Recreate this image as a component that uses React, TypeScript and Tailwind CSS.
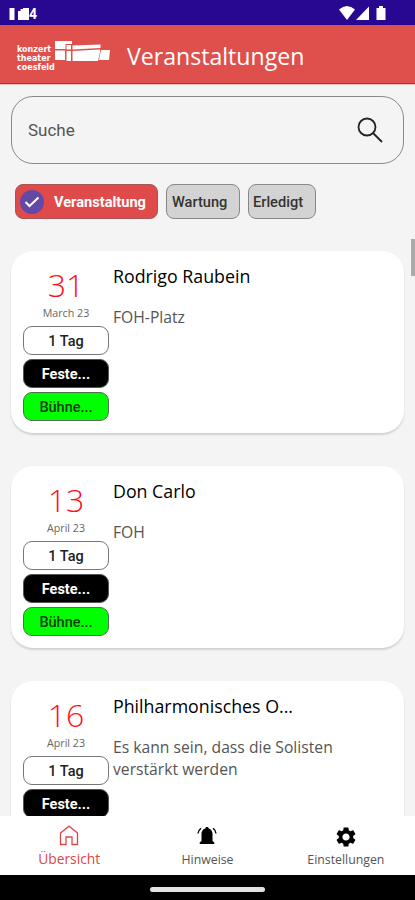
import React from 'react';
import { MdSettings } from 'react-icons/md';

interface EventItem {
  day: string;
  month: string;
  title: string;
  note: string;
}

const events: EventItem[] = [
  { day: '31', month: 'March 23', title: 'Rodrigo Raubein', note: 'FOH-Platz' },
  { day: '13', month: 'April 23', title: 'Don Carlo', note: 'FOH' },
  { day: '16', month: 'April 23', title: 'Philharmonisches O...', note: 'Es kann sein, dass die Solisten verstärkt werden' },
];

const StatusBar: React.FC = () => (
  <div className="h-[25px] shrink-0 bg-[#290891] flex items-start justify-between pl-[9px] pr-[28px] text-white">
    <div className="flex items-center h-[27px]">
      <svg width="21" height="13" viewBox="0 0 21 13" fill="currentColor">
        <path d="M0.5 1h5v12h-5zM9 4h2.5V2H14V1h6v12H9z" />
      </svg>
      <span className="font-['Roboto',sans-serif] font-bold text-[14px] leading-none -ml-px">4</span>
    </div>
    <svg className="mt-[5px]" width="48" height="16" viewBox="0 0 48 16" fill="currentColor">
      <path d="M0 4.5Q8 -2.5 16 4.5L8 15z" />
      <path d="M30 1.5V15H17z" />
      <path d="M37.5 3H40V1h4v2h2.5v12h-9z" />
    </svg>
  </div>
);

const Logo: React.FC = () => (
  <div className="flex w-[100px] h-[36px] text-white">
    <div className="w-[37px] pt-[9px] font-['DejaVu_Sans',sans-serif] font-bold text-[8px] leading-[9px]">
      <div>konzert</div>
      <div>theater</div>
      <div>coesfeld</div>
    </div>
    <svg className="mt-[4px] shrink-0" width="57" height="23" viewBox="0 0 57 23" fill="currentColor">
      <path d="M1 1h17v3h-6.500V9H1zM1 10.500h10v9.500H1zM12.500 5H17v4.500h-4.500zM12.500 11H17v10h-4.500zM18.500 5.500l28-1v3.500L18.500 9.500zM18.500 11l27.500-1.500v3L44 21H18.500zM47 10h9L55 20h-10z" />
    </svg>
  </div>
);

const Badge: React.FC<{ label: string; color: string }> = ({ label, color }) => (
  <div
    className={`w-[86px] h-[29px] rounded-[9px] border flex items-center justify-center pt-[3px] font-['Roboto',sans-serif] text-[14.5px] ${color}`}
  >
    {label}
  </div>
);

const EventCard: React.FC<{ event: EventItem }> = ({ event }) => (
  <article className="h-[182px] shrink-0 bg-white rounded-[22px] shadow-[0_2px_2px_rgba(0,0,0,0.14)] flex pl-3">
    <div className="w-[86px] shrink-0 flex flex-col items-center">
      <div className="mt-[15px] h-[39px] text-[32px] leading-[38px] font-light text-[#ff1018]">{event.day}</div>
      <div className="h-[21px] text-[10.7px] leading-[16px] text-[#666666]">{event.month}</div>
      <div className="flex flex-col gap-1">
        <Badge label="1 Tag" color="bg-white border-[#777777] text-[#222222] font-medium" />
        <Badge label="Feste..." color="bg-black border-[#555555] text-white font-bold" />
        <Badge label="Bühne..." color="bg-[#00ff00] border-[#507050] text-[#0b3d0b] font-medium" />
      </div>
    </div>
    <div className="pl-1 pt-[12px] w-[260px]">
      <h2 className="text-[17.8px] leading-[26px] text-black whitespace-nowrap">{event.title}</h2>
      <p className="mt-[17px] text-[15.7px] leading-[22px] text-[#555555]">{event.note}</p>
    </div>
  </article>
);

export default function App() {
  return (
    <div className="w-[415px] h-[900px] flex flex-col overflow-hidden bg-[#f4f4f4] font-['Open_Sans',sans-serif]">
      <StatusBar />
      <header className="h-[59px] shrink-0 bg-[#df504d] border-b border-[#c92424] flex items-center pl-[17px]">
        <Logo />
        <h1 className="ml-[10px] mt-[5px] text-[23.1px] leading-none text-white whitespace-nowrap">Veranstaltungen</h1>
      </header>
      <div className="h-px shrink-0 bg-[#f9c3c0]" />

      <main className="relative flex-1 min-h-0 overflow-hidden px-[11px] pt-[11px]">
        <div className="h-[68px] rounded-[22px] border border-[#8a8a8a] flex items-center justify-between pl-4 pr-[19px]">
          <span className="font-['Roboto',sans-serif] text-[17px] text-[#555555] mt-0.5">Suche</span>
          <svg width="28" height="28" viewBox="0 0 28 28" fill="none" stroke="#222222" strokeWidth="1.8">
            <circle cx="11" cy="11" r="8.5" />
            <path d="M17 17l9 9" />
          </svg>
        </div>

        <div className="mt-[20px] ml-1 flex h-[35px] font-['Roboto',sans-serif] font-bold text-[14.6px]">
          <div className="w-[143px] rounded-lg border border-[#a85555] bg-[#df4a4a] text-white flex items-center pl-1">
            <span className="w-6 h-6 rounded-full bg-[#6249a8] flex items-center justify-center">
              <svg width="16" height="16" viewBox="0 0 16 16" fill="none" stroke="white" strokeWidth="2">
                <path d="M1.5 8l4 4L14.5 3.5" />
              </svg>
            </span>
            <span className="ml-[10px] mt-[3px]">Veranstaltung</span>
          </div>
          <div className="ml-2 w-[74px] rounded-lg border border-[#888888] bg-[#d3d3d3] text-[#333333] font-medium flex items-center pt-[3px] pl-[5px]">Wartung</div>
          <div className="ml-2 w-[68px] rounded-lg border border-[#888888] bg-[#d3d3d3] text-[#333333] font-medium flex items-center pt-[3px] pl-1">Erledigt</div>
        </div>

        <div className="mt-8 flex flex-col gap-[33px]">
          {events.map((event) => (
            <EventCard key={event.title} event={event} />
          ))}
        </div>
        <div className="absolute right-0 top-[154px] w-1 h-[37px] bg-[#aaaaaa]" />
      </main>

      <nav className="h-[59px] shrink-0 bg-white grid grid-cols-3 text-[#555555]">
        <div className="flex flex-col items-center pt-[9px] text-[#e04545]">
          <svg width="20" height="21" viewBox="0 0 20 21" fill="none" stroke="currentColor" strokeWidth="1.3">
            <path d="M1.5 8L10 1.2l8.5 6.8V19.5H13V12H7v7.5H1.5z" />
          </svg>
          <span className="mt-[3px] text-[13.8px] leading-[20px]">Übersicht</span>
        </div>
        <div className="flex flex-col items-center pt-[10px]">
          <svg width="20" height="20" viewBox="0 0 20 20" fill="black">
            <path d="M10 1c1 0 1.6.6 1.7 1.4C14.5 3.2 15.5 5.5 15.5 8v7l1.8 1.5V18H2.7v-1.5L4.5 15V8c0-2.500 1-4.800 3.800-5.600C8.400 1.600 9 1 10 1z" />
            <path d="M4 2.200Q1.500 4 1 7.500M16 2.200Q18.500 4 19 7.500" fill="none" stroke="black" strokeWidth="1.400" />
          </svg>
          <span className="mt-[4px] text-[12.3px] leading-[20px]">Hinweise</span>
        </div>
        <div className="flex flex-col items-center pt-[9px]">
          <MdSettings className="w-6 h-6 text-black" />
          <span className="mt-px text-[12.3px] leading-[20px]">Einstellungen</span>
        </div>
      </nav>
      <div className="h-[25px] shrink-0 bg-black flex justify-center pt-[12px]">
        <div className="w-[115px] h-[5px] rounded-full bg-[#e2e2e2]" />
      </div>
    </div>
  );
}
